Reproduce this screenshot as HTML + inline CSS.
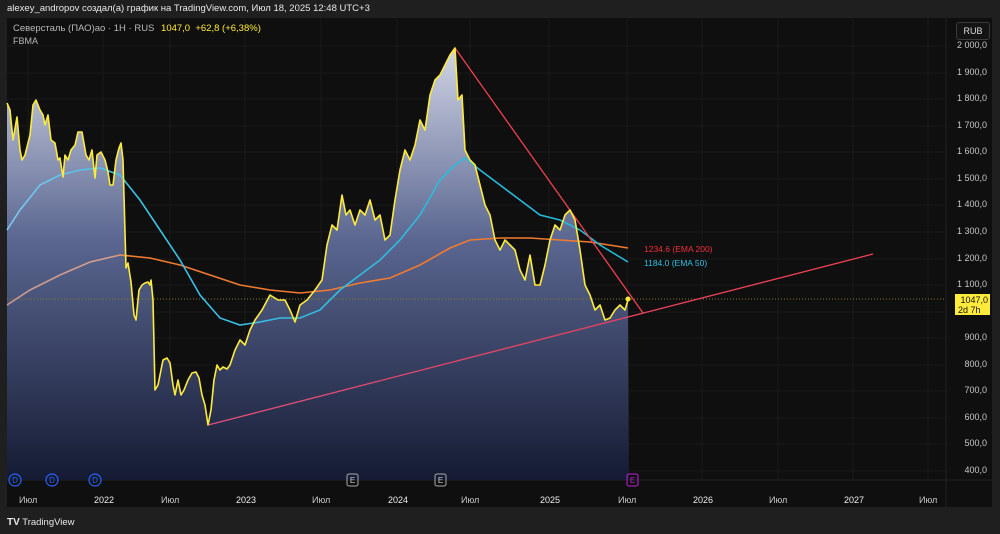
<!DOCTYPE html>
<html><head><meta charset="utf-8"><style>
body{margin:0;width:1000px;height:534px;background:#1f1f1f;overflow:hidden;font-family:"Liberation Sans","DejaVu Sans",sans-serif;position:relative}
.t{position:absolute;white-space:nowrap}
</style></head><body>
<div class="t" style="left:7px;top:3px;font-size:9.5px;color:#e8e8e8">alexey_andropov создал(а) график на TradingView.com, Июл 18, 2025 12:48 UTC+3</div>
<svg width="1000" height="534" style="position:absolute;left:0;top:0">
<defs>
<linearGradient id="f" gradientUnits="userSpaceOnUse" x1="0" y1="46" x2="0" y2="480"><stop offset="0" stop-color="#d2d6e6"/><stop offset="0.45" stop-color="#5a6690"/><stop offset="1" stop-color="#141b33"/></linearGradient>
<linearGradient id="o" gradientUnits="userSpaceOnUse" x1="7" y1="0" x2="628" y2="0"><stop offset="0" stop-color="#c89890"/><stop offset="0.17" stop-color="#d8a090"/><stop offset="0.2" stop-color="#f07a30"/><stop offset="1" stop-color="#f07a30"/></linearGradient>
<linearGradient id="c" gradientUnits="userSpaceOnUse" x1="7" y1="0" x2="628" y2="0"><stop offset="0" stop-color="#80c8f0"/><stop offset="0.18" stop-color="#40c0e8"/><stop offset="1" stop-color="#20b8d8"/></linearGradient>
<linearGradient id="s" gradientUnits="userSpaceOnUse" x1="208" y1="0" x2="873" y2="0"><stop offset="0" stop-color="#e0507a"/><stop offset="0.6" stop-color="#e84060"/><stop offset="1" stop-color="#f04050"/></linearGradient>
</defs>
<rect x="7" y="18" width="985" height="489" fill="#0f0f0f"/>
<g stroke="#191919" stroke-width="1">
<line x1="28" y1="18" x2="28" y2="480"/><line x1="103" y1="18" x2="103" y2="480"/><line x1="170" y1="18" x2="170" y2="480"/><line x1="245" y1="18" x2="245" y2="480"/><line x1="321" y1="18" x2="321" y2="480"/><line x1="397" y1="18" x2="397" y2="480"/><line x1="470" y1="18" x2="470" y2="480"/><line x1="549" y1="18" x2="549" y2="480"/><line x1="627" y1="18" x2="627" y2="480"/><line x1="702" y1="18" x2="702" y2="480"/><line x1="778" y1="18" x2="778" y2="480"/><line x1="853" y1="18" x2="853" y2="480"/><line x1="928" y1="18" x2="928" y2="480"/>
<line x1="7" y1="46" x2="946" y2="46"/><line x1="7" y1="73" x2="946" y2="73"/><line x1="7" y1="99" x2="946" y2="99"/><line x1="7" y1="126" x2="946" y2="126"/><line x1="7" y1="152" x2="946" y2="152"/><line x1="7" y1="179" x2="946" y2="179"/><line x1="7" y1="205" x2="946" y2="205"/><line x1="7" y1="232" x2="946" y2="232"/><line x1="7" y1="259" x2="946" y2="259"/><line x1="7" y1="285" x2="946" y2="285"/><line x1="7" y1="312" x2="946" y2="312"/><line x1="7" y1="338" x2="946" y2="338"/><line x1="7" y1="365" x2="946" y2="365"/><line x1="7" y1="391" x2="946" y2="391"/><line x1="7" y1="418" x2="946" y2="418"/><line x1="7" y1="444" x2="946" y2="444"/><line x1="7" y1="471" x2="946" y2="471"/>
</g>
<line x1="7" y1="480" x2="992" y2="480" stroke="#222"/>
<line x1="946" y1="18" x2="946" y2="507" stroke="#222"/>
<polygon fill="url(#f)" points="7,480 7,103 10,110 13,140 17,117 20,150 22,160 25,155 30,135 33,105 36,100 40,110 43,115 45,125 48,115 51,140 55,143 58,160 60,158 63,177 65,155 68,160 71,150 75,145 78,132 82,132 86,155 89,160 92,150 95,178 97,155 101,152 105,160 108,172 110,185 113,185 116,160 119,148 121,143 123,160 126,268 128,263 131,282 134,315 136,320 139,290 142,285 145,283 148,282 150,285 151,280 153,300 155,390 158,385 163,360 167,358 170,363 173,385 175,395 178,380 181,395 184,390 188,380 192,373 196,372 199,378 202,395 205,405 208,425 211,410 214,380 217,365 220,370 223,367 227,369 230,365 235,350 240,340 245,345 250,330 255,320 262,310 270,295 278,300 285,300 290,310 295,322 300,305 307,300 315,290 322,280 327,245 332,225 337,230 342,195 346,215 350,210 355,225 360,210 365,215 370,200 375,220 380,215 385,240 390,235 395,200 400,170 405,150 410,160 415,145 420,120 425,130 430,95 435,80 440,75 445,65 450,55 455,48 458,100 462,95 465,150 470,160 475,165 480,185 485,205 490,215 495,240 500,250 505,240 510,245 515,250 520,270 525,280 530,255 535,285 540,285 545,265 550,240 555,225 560,230 565,215 570,210 575,220 580,250 585,285 590,295 595,310 600,305 605,320 610,318 615,310 620,305 625,310 628,300 629,480"/>
<line x1="7" y1="299" x2="946" y2="299" stroke="#8a7a30" stroke-width="1" stroke-dasharray="1,2"/>
<polyline fill="none" stroke="url(#o)" stroke-width="1.6" points="7,305 30,290 60,275 90,262 120,255 150,258 180,265 210,275 240,285 270,290 300,293 330,290 360,283 390,278 420,265 450,248 470,240 500,238 530,238 560,240 590,242 628,248"/>
<polyline fill="none" stroke="url(#c)" stroke-width="1.6" points="7,230 20,210 40,185 60,175 80,170 100,168 120,175 140,200 160,230 180,260 200,295 220,318 240,325 260,322 280,318 300,318 320,310 340,290 360,275 380,260 400,240 420,215 440,180 455,165 465,158 480,170 500,185 520,200 540,215 560,220 580,230 600,245 628,262"/>
<line x1="455" y1="48" x2="643" y2="313" stroke="#f04050" stroke-width="1.3"/>
<line x1="208" y1="425" x2="873" y2="254" stroke="url(#s)" stroke-width="1.3"/>
<polyline fill="none" stroke="#ffeb3b" stroke-width="1.6" stroke-linejoin="round" points="7,103 10,110 13,140 17,117 20,150 22,160 25,155 30,135 33,105 36,100 40,110 43,115 45,125 48,115 51,140 55,143 58,160 60,158 63,177 65,155 68,160 71,150 75,145 78,132 82,132 86,155 89,160 92,150 95,178 97,155 101,152 105,160 108,172 110,185 113,185 116,160 119,148 121,143 123,160 126,268 128,263 131,282 134,315 136,320 139,290 142,285 145,283 148,282 150,285 151,280 153,300 155,390 158,385 163,360 167,358 170,363 173,385 175,395 178,380 181,395 184,390 188,380 192,373 196,372 199,378 202,395 205,405 208,425 211,410 214,380 217,365 220,370 223,367 227,369 230,365 235,350 240,340 245,345 250,330 255,320 262,310 270,295 278,300 285,300 290,310 295,322 300,305 307,300 315,290 322,280 327,245 332,225 337,230 342,195 346,215 350,210 355,225 360,210 365,215 370,200 375,220 380,215 385,240 390,235 395,200 400,170 405,150 410,160 415,145 420,120 425,130 430,95 435,80 440,75 445,65 450,55 455,48 458,100 462,95 465,150 470,160 475,165 480,185 485,205 490,215 495,240 500,250 505,240 510,245 515,250 520,270 525,280 530,255 535,285 540,285 545,265 550,240 555,225 560,230 565,215 570,210 575,220 580,250 585,285 590,295 595,310 600,305 605,320 610,318 615,310 620,305 625,310 628,300"/>
<circle cx="628" cy="299" r="2.5" fill="#ffeb3b"/>
<g fill="none" stroke="#2962ff" stroke-width="1.2"><circle cx="15" cy="480" r="6"/><circle cx="52" cy="480" r="6"/><circle cx="95" cy="480" r="6"/></g>
<g fill="none" stroke="#aaa" stroke-width="1"><rect x="347" y="474" width="11" height="12" rx="2"/><rect x="435" y="474" width="11" height="12" rx="2"/></g>
<rect x="627" y="474" width="11" height="12" rx="2" fill="none" stroke="#c020e0"/>
<g font-size="8" fill="#ccc" text-anchor="middle" font-family="Liberation Sans"><text x="15" y="483" fill="#2962ff">D</text><text x="52" y="483" fill="#2962ff">D</text><text x="95" y="483" fill="#2962ff">D</text><text x="352.5" y="483">E</text><text x="440.5" y="483">E</text><text x="632.5" y="483" fill="#c020e0">E</text></g>
</svg>
<div class="t" style="left:13px;top:23px;font-size:9.5px;color:#b8b8b8">Северсталь (ПАО)ао · 1Н · RUS <span style="color:#ffeb3b;margin-left:4px">1047,0 &nbsp;+62,8 (+6,38%)</span></div>
<div class="t" style="left:13px;top:36px;font-size:9px;color:#b8b8b8">FBMA</div>
<div class="t" style="left:644px;top:244px;font-size:8.5px;color:#f0303a">1234.6 (EMA 200)</div>
<div class="t" style="left:644px;top:258px;font-size:8.5px;color:#30c0e0">1184.0 (EMA 50)</div>
<div class="t" style="left:956px;top:22px;width:32px;height:16px;border:1px solid #3a3a3a;border-radius:3px;background:#141414;color:#ddd;font-size:9px;text-align:center;line-height:16px">RUB</div>
<div style="position:absolute;left:947px;top:40px;width:45px;font-size:9px;color:#c8c8c8;text-align:right">
<div class="t" style="right:5px;top:0">2 000,0</div><div class="t" style="right:5px;top:27px">1 900,0</div><div class="t" style="right:5px;top:53px">1 800,0</div><div class="t" style="right:5px;top:80px">1 700,0</div><div class="t" style="right:5px;top:106px">1 600,0</div><div class="t" style="right:5px;top:133px">1 500,0</div><div class="t" style="right:5px;top:159px">1 400,0</div><div class="t" style="right:5px;top:186px">1 300,0</div><div class="t" style="right:5px;top:213px">1 200,0</div><div class="t" style="right:5px;top:239px">1 100,0</div><div class="t" style="right:5px;top:292px">900,0</div><div class="t" style="right:5px;top:319px">800,0</div><div class="t" style="right:5px;top:345px">700,0</div><div class="t" style="right:5px;top:372px">600,0</div><div class="t" style="right:5px;top:398px">500,0</div><div class="t" style="right:5px;top:425px">400,0</div></div>
<div class="t" style="left:955px;top:294px;width:35px;height:21px;background:#ffeb3b;color:#111;font-size:9px;line-height:10px;padding-left:3px;box-sizing:border-box;padding-top:1px">&nbsp;1047,0<br>2d 7h</div>
<div style="font-size:9px;color:#c8c8c8">
<div class="t" style="left:19px;top:495px">Июл</div><div class="t" style="left:94px;top:495px;color:#eee">2022</div><div class="t" style="left:161px;top:495px">Июл</div><div class="t" style="left:236px;top:495px;color:#eee">2023</div><div class="t" style="left:312px;top:495px">Июл</div><div class="t" style="left:388px;top:495px;color:#eee">2024</div><div class="t" style="left:461px;top:495px">Июл</div><div class="t" style="left:540px;top:495px;color:#eee">2025</div><div class="t" style="left:618px;top:495px">Июл</div><div class="t" style="left:693px;top:495px;color:#eee">2026</div><div class="t" style="left:769px;top:495px">Июл</div><div class="t" style="left:844px;top:495px;color:#eee">2027</div><div class="t" style="left:919px;top:495px">Июл</div></div>
<div class="t" style="left:7px;top:517px;font-size:9.5px;color:#e8e8e8"><b style="font-size:10px">TV</b> TradingView</div>
</body></html>
